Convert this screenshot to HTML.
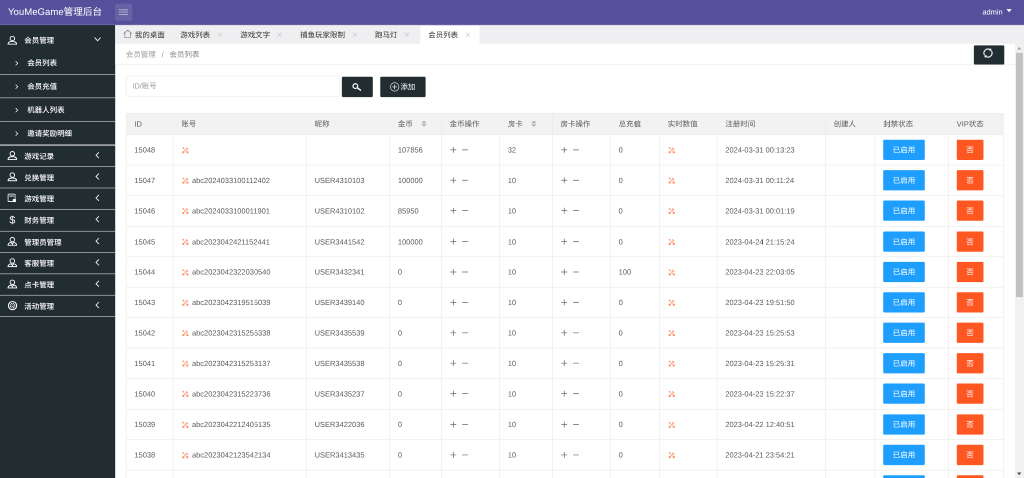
<!DOCTYPE html><html lang="zh-CN"><head><meta charset="utf-8"><title>YouMeGame管理后台</title><style>
*{box-sizing:border-box;margin:0;padding:0}
html,body{width:1024px;height:478px;overflow:hidden;background:#fff}
body{text-rendering:geometricPrecision;font-family:"Liberation Sans","Noto Sans CJK SC",sans-serif;font-size:14px;color:#333}
#half{position:absolute;left:0;top:0;width:2048px;height:956px;transform:scale(0.5);transform-origin:0 0;will-change:transform;overflow:hidden;background:#fff}
#app{position:absolute;left:0;top:0;width:1920px;height:897px;transform:scale(1.0666667);transform-origin:0 0;overflow:hidden;background:#fff}
.hd{position:absolute;left:0;top:0;width:1920px;height:46.6px;background:#55509b;border-bottom:1.6px solid #7673af;z-index:5}
.logo{position:absolute;left:15px;top:0;line-height:45px;font-size:18px;color:#fff;white-space:nowrap}
.burger{position:absolute;left:216px;top:7px;width:32px;height:32px;border-radius:3px;background:#6663a5}
.burger i{position:absolute;left:7px;width:17px;height:1.2px;background:linear-gradient(90deg,rgba(255,255,255,.9) 4.2px,rgba(255,255,255,.3) 4.2px,rgba(255,255,255,.3) 5.2px,rgba(255,255,255,.9) 5.2px)}
.adm{position:absolute;right:40px;top:0;line-height:45px;font-size:14px;color:#fff}
.caret{position:absolute;right:23px;top:17px;width:0;height:0;border:5.5px solid transparent;border-top:6px solid #fff;border-bottom:0}
.side{position:absolute;left:0;top:46px;width:216px;height:851px;background:#222d32}
.side .it{position:absolute;left:0;width:216px;color:#fff;font-size:14px;font-weight:500;white-space:nowrap}
.side .it .tx{position:absolute;left:45.5px;top:0}
.side .ic{position:absolute;left:13.9px;width:18.3px;height:16.9px}
.side .dl{font-size:20px;line-height:19px;text-align:center;color:#fff}
.side .cv{position:absolute;left:177px;width:12px;height:14px}
.side .cvd{position:absolute;left:176px;width:14px;height:12px}
.side .cvr{position:absolute;left:28px;width:7px;height:11px}
.side .sep{position:absolute;left:0;width:216px;height:1px;background:#e5e5e5}
.tabs{position:absolute;left:216px;top:46px;width:1704px;height:36.8px;background:#efeef0}
.tab{position:absolute;top:0;height:36.8px;line-height:38px;font-size:14px;color:#333;white-space:nowrap}
.tab.on{background:linear-gradient(#efeef0 3px,#fff 3px)}
.tab .x{position:absolute;top:14px;width:10px;height:10px}
.nav{position:absolute;left:216px;top:82.3px;width:1688px;height:40px;border-bottom:1px solid #e5e5e5;background:#fff}
.nav .bc{position:absolute;left:20px;top:0;line-height:41px;font-size:14px;color:#999;white-space:nowrap}
.nav .bc b{font-weight:normal;color:#808080}
.rf{position:absolute;left:1826px;top:85px;width:57px;height:36px;background:#222d32;border-radius:2px}
.inp{position:absolute;left:236px;top:142.3px;width:401px;height:38.6px;border:1px solid #e6e6e6;border-radius:2px;line-height:36px;padding-left:11px;color:#9a9a9a;font-size:14px}
.btn{position:absolute;top:143.5px;height:38px;background:#222d32;border-radius:2px;color:#fff;font-size:14px;line-height:38px;white-space:nowrap}
.sb{position:absolute;left:1903px;top:82px;width:17px;height:815px;background:#f1f1f1}
.sb .th{position:absolute;left:2px;top:17.4px;width:13px;height:457.5px;background:#c1c1c1}
.sb .up{position:absolute;left:4px;top:6px;width:0;height:0;border:4px solid transparent;border-bottom:5px solid #a3a3a3;border-top:0}
.sb .dn{position:absolute;left:4px;bottom:6px;width:0;height:0;border:4px solid transparent;border-top:5px solid #505050;border-bottom:0}
table{position:absolute;left:236px;top:212px;border-collapse:collapse;table-layout:fixed;width:1645px;color:#5a5a5a;font-size:14px}
th,td{border:1px solid #e6e6e6;padding:0 15px;text-align:left;font-weight:normal;white-space:nowrap;overflow:hidden;position:relative}
th{height:40px;background:#f2f2f2;line-height:20px;padding-bottom:2px}
td{height:57.18px;line-height:20px}
.tl{width:13px;height:13px;vertical-align:-2px;margin-left:1px;margin-right:6px;opacity:.66}
.pm{width:12px;height:12px;vertical-align:-1px;margin-right:8.5px;margin-left:1px}
.sort{display:inline-block;position:relative;width:10px;height:20px;margin-left:15px;vertical-align:top}
.sort:before{content:"";position:absolute;left:0.5px;top:-0.5px;border:5px solid transparent;border-bottom-color:#b0b0b0}
.sort:after{content:"";position:absolute;left:0.5px;top:11.5px;border:5px solid transparent;border-top-color:#b0b0b0}
.b1,.b2{display:inline-block;height:38px;line-height:38px;padding:0 18px;color:#fff;border-radius:2px;vertical-align:middle}
.b1{background:#1E9FFF;margin-left:-0.4px;padding:0 18.4px}.b2{background:#FF5722;margin-left:-0.4px}
</style></head><body><div id="half"><div id="app">
<div class="hd"><div class="logo">YouMeGame管理后台</div><div class="burger"><i style="top:10.7px"></i><i style="top:15.3px"></i><i style="top:19.9px"></i></div><div class="adm">admin</div><div class="caret"></div></div>
<div class="side">
<div class="it" style="top:10px;height:40px;line-height:40px"><svg class="ic" style="top:11px" viewBox="0 0 19 17.5"><circle cx="9.5" cy="5.5" r="4.4" fill="none" stroke="#fff" stroke-width="1.8"/><path d="M1 16.5 C1.3 12.8 4.8 11.1 9.5 11.1 C14.2 11.1 17.7 12.8 18 16.5 Z" fill="none" stroke="#fff" stroke-width="1.8" stroke-linejoin="round"/></svg><span class="tx">会员管理</span><svg class="cvd" style="top:12px" viewBox="0 0 14 12"><path d="M1.5 2.5 L7 8.5 L12.5 2.5" fill="none" stroke="#fff" stroke-width="1.6"/></svg></div>
<div class="it" style="top:50px;height:44px;line-height:44.6px"><svg class="cvr" style="top:17px" viewBox="0 0 8 12"><path d="M1.5 1.5 L6 6 L1.5 10.5" fill="none" stroke="#fff" stroke-width="1.5"/></svg><span class="tx" style="left:51px">会员列表</span></div>
<div class="sep" style="top:93px"></div>
<div class="it" style="top:94px;height:44px;line-height:44.6px"><svg class="cvr" style="top:17px" viewBox="0 0 8 12"><path d="M1.5 1.5 L6 6 L1.5 10.5" fill="none" stroke="#fff" stroke-width="1.5"/></svg><span class="tx" style="left:51px">会员充值</span></div>
<div class="sep" style="top:137px"></div>
<div class="it" style="top:138px;height:44px;line-height:44.6px"><svg class="cvr" style="top:17px" viewBox="0 0 8 12"><path d="M1.5 1.5 L6 6 L1.5 10.5" fill="none" stroke="#fff" stroke-width="1.5"/></svg><span class="tx" style="left:51px">机器人列表</span></div>
<div class="sep" style="top:181px"></div>
<div class="it" style="top:182px;height:44px;line-height:44.6px"><svg class="cvr" style="top:17px" viewBox="0 0 8 12"><path d="M1.5 1.5 L6 6 L1.5 10.5" fill="none" stroke="#fff" stroke-width="1.5"/></svg><span class="tx" style="left:51px">邀请奖励明细</span></div>
<div class="sep" style="top:225px;height:2px"></div>
<div class="it" style="top:227px;height:40px;line-height:40px"><svg class="ic" style="top:10px" viewBox="0 0 19 17.5"><circle cx="9.5" cy="5.5" r="4.4" fill="none" stroke="#fff" stroke-width="1.8"/><path d="M1 16.5 C1.3 12.8 4.8 11.1 9.5 11.1 C14.2 11.1 17.7 12.8 18 16.5 Z" fill="none" stroke="#fff" stroke-width="1.8" stroke-linejoin="round"/></svg><span class="tx">游戏记录</span><svg class="cv" style="top:11px" viewBox="0 0 12 14"><path d="M8.5 1.5 L3 7 L8.5 12.5" fill="none" stroke="#fff" stroke-width="1.6"/></svg></div>
<div class="sep" style="top:266px"></div>
<div class="it" style="top:267px;height:40px;line-height:40px"><svg class="ic" style="top:10px" viewBox="0 0 19 17.5"><circle cx="9.5" cy="5.5" r="4.4" fill="none" stroke="#fff" stroke-width="1.8"/><path d="M1 16.5 C1.3 12.8 4.8 11.1 9.5 11.1 C14.2 11.1 17.7 12.8 18 16.5 Z" fill="none" stroke="#fff" stroke-width="1.8" stroke-linejoin="round"/></svg><span class="tx">兑换管理</span><svg class="cv" style="top:11px" viewBox="0 0 12 14"><path d="M8.5 1.5 L3 7 L8.5 12.5" fill="none" stroke="#fff" stroke-width="1.6"/></svg></div>
<div class="sep" style="top:306px"></div>
<div class="it" style="top:307px;height:40px;line-height:40px"><svg class="ic" style="top:10px" viewBox="0 0 19 17.5"><rect x="1.2" y="0.9" width="13.6" height="14.6" rx="1.2" fill="none" stroke="#fff" stroke-width="1.5"/><path d="M3.6 4.8H12.4" stroke="#fff" stroke-width="1.8"/><rect x="10.4" y="10.6" width="6" height="5.8" fill="#fff"/></svg><span class="tx">游戏管理</span><svg class="cv" style="top:11px" viewBox="0 0 12 14"><path d="M8.5 1.5 L3 7 L8.5 12.5" fill="none" stroke="#fff" stroke-width="1.6"/></svg></div>
<div class="sep" style="top:346px"></div>
<div class="it" style="top:347px;height:40px;line-height:40px"><span class="ic dl" style="top:11px">$</span><span class="tx">财务管理</span><svg class="cv" style="top:11px" viewBox="0 0 12 14"><path d="M8.5 1.5 L3 7 L8.5 12.5" fill="none" stroke="#fff" stroke-width="1.6"/></svg></div>
<div class="sep" style="top:387px"></div>
<div class="it" style="top:388px;height:40px;line-height:40px"><svg class="ic" style="top:10px" viewBox="0 0 19 17.5"><circle cx="9.5" cy="5.5" r="4.4" fill="none" stroke="#fff" stroke-width="1.8"/><path d="M1 16.5 C1.3 13.2 4 11.5 7 11 L9.5 13.8 L12 11 C15 11.5 17.7 13.2 18 16.5 Z" fill="none" stroke="#fff" stroke-width="1.8" stroke-linejoin="round"/><path d="M9.5 13.8 V16.4" stroke="#fff" stroke-width="1.5"/></svg><span class="tx">管理员管理</span><svg class="cv" style="top:11px" viewBox="0 0 12 14"><path d="M8.5 1.5 L3 7 L8.5 12.5" fill="none" stroke="#fff" stroke-width="1.6"/></svg></div>
<div class="sep" style="top:427px"></div>
<div class="it" style="top:428px;height:40px;line-height:40px"><svg class="ic" style="top:10px" viewBox="0 0 19 17.5"><circle cx="9.5" cy="5.5" r="4.4" fill="none" stroke="#fff" stroke-width="1.8"/><path d="M1 16.5 C1.3 13.2 4 11.5 7 11 L9.5 13.8 L12 11 C15 11.5 17.7 13.2 18 16.5 Z" fill="none" stroke="#fff" stroke-width="1.8" stroke-linejoin="round"/><path d="M9.5 13.8 V16.4" stroke="#fff" stroke-width="1.5"/></svg><span class="tx">客服管理</span><svg class="cv" style="top:11px" viewBox="0 0 12 14"><path d="M8.5 1.5 L3 7 L8.5 12.5" fill="none" stroke="#fff" stroke-width="1.6"/></svg></div>
<div class="sep" style="top:467px"></div>
<div class="it" style="top:468px;height:40px;line-height:40px"><svg class="ic" style="top:10px" viewBox="0 0 19 17.5"><circle cx="9.5" cy="5.5" r="4.4" fill="none" stroke="#fff" stroke-width="1.8"/><path d="M1 16.5 C1.3 13.2 4 11.5 7 11 L9.5 13.8 L12 11 C15 11.5 17.7 13.2 18 16.5 Z" fill="none" stroke="#fff" stroke-width="1.8" stroke-linejoin="round"/><path d="M9.5 13.8 V16.4" stroke="#fff" stroke-width="1.5"/></svg><span class="tx">点卡管理</span><svg class="cv" style="top:11px" viewBox="0 0 12 14"><path d="M8.5 1.5 L3 7 L8.5 12.5" fill="none" stroke="#fff" stroke-width="1.6"/></svg></div>
<div class="sep" style="top:507px"></div>
<div class="it" style="top:508px;height:40px;line-height:40px"><svg class="ic" style="top:9.8px;left:13.6px;width:19px;height:18px" viewBox="0 0 19 18"><circle cx="9.5" cy="9" r="7.7" fill="none" stroke="#fff" stroke-width="2"/><circle cx="9.5" cy="9" r="4.3" fill="none" stroke="#fff" stroke-width="1.8" stroke-dasharray="2.2 1.18"/><circle cx="9.5" cy="9" r="1.6" fill="none" stroke="#fff" stroke-width="1"/></svg><span class="tx">活动管理</span><svg class="cv" style="top:11px" viewBox="0 0 12 14"><path d="M8.5 1.5 L3 7 L8.5 12.5" fill="none" stroke="#fff" stroke-width="1.6"/></svg></div>
<div class="sep" style="top:547px"></div>
</div>
<div class="tabs">
<div class="tab" style="left:0.0px;width:107.0px"><svg style="position:absolute;left:15px;top:9px;width:17px;height:17px" viewBox="0 0 16 16"><path d="M1 7.6 L8 1.2 L15 7.6 M3 6.4 V14.4 H13 V6.4" fill="none" stroke="#6a6a6a" stroke-width="1"/></svg><span style="position:absolute;left:37px">我的桌面</span></div>
<div class="tab" style="left:107.0px;width:112.4px"><span style="position:absolute;left:15px">游戏列表</span><svg class="x" style="left:84px" viewBox="0 0 10 10"><path d="M1 1L9 9M9 1L1 9" stroke="#c2c2c2" stroke-width="1" fill="none"/></svg></div>
<div class="tab" style="left:219.4px;width:112.4px"><span style="position:absolute;left:15px">游戏文字</span><svg class="x" style="left:84px" viewBox="0 0 10 10"><path d="M1 1L9 9M9 1L1 9" stroke="#c2c2c2" stroke-width="1" fill="none"/></svg></div>
<div class="tab" style="left:331.8px;width:140.4px"><span style="position:absolute;left:15px">捕鱼玩家限制</span><svg class="x" style="left:112px" viewBox="0 0 10 10"><path d="M1 1L9 9M9 1L1 9" stroke="#c2c2c2" stroke-width="1" fill="none"/></svg></div>
<div class="tab" style="left:472.2px;width:98.4px"><span style="position:absolute;left:15px">跑马灯</span><svg class="x" style="left:70px" viewBox="0 0 10 10"><path d="M1 1L9 9M9 1L1 9" stroke="#c2c2c2" stroke-width="1" fill="none"/></svg></div>
<div class="tab on" style="left:572.0px;width:111.0px"><span style="position:absolute;left:15px">会员列表</span><svg class="x" style="left:84px" viewBox="0 0 10 10"><path d="M1 1L9 9M9 1L1 9" stroke="#c2c2c2" stroke-width="1" fill="none"/></svg></div>
</div>
<div class="nav"><div class="bc">会员管理<i style="font-style:normal;margin:0 11px">/</i><b>会员列表</b></div></div>
<div class="rf"><svg style="position:absolute;left:15.7px;top:3.9px;width:21px;height:21px" viewBox="0 0 20 20"><path d="M3.76 13.6 A7.2 7.2 0 0 1 13.6 3.76 M16.24 6.4 A7.2 7.2 0 0 1 6.4 16.24" fill="none" stroke="#fff" stroke-width="1.9"/><path d="M16.6 5.6 L15.2 1.2 L11.8 6 Z M3.4 14.4 L4.8 18.8 L8.2 14 Z" fill="#fff"/></svg></div>
<div class="inp">ID/账号</div>
<div class="btn" style="left:641px;width:58px"><svg style="position:absolute;left:0;top:0;width:58px;height:38px" viewBox="0 0 58 38"><circle cx="25.3" cy="17.4" r="4.4" fill="none" stroke="#fff" stroke-width="2.2"/><path d="M29 20.6 L35 25" stroke="#fff" stroke-width="2.6" stroke-linecap="round"/></svg></div>
<div class="btn" style="left:713px;width:85px"><svg style="position:absolute;left:18px;top:10px;width:18px;height:18px" viewBox="0 0 18 18"><circle cx="9" cy="9" r="8" fill="none" stroke="#fff" stroke-width="1.2"/><path d="M9 4.4V13.6M4.4 9H13.6" stroke="#fff" stroke-width="1.3"/></svg><span style="position:absolute;left:37.6px">添加</span></div>
<table><colgroup><col style="width:88px"><col style="width:250px"><col style="width:156px"><col style="width:97px"><col style="width:109px"><col style="width:99px"><col style="width:109px"><col style="width:92px"><col style="width:108px"><col style="width:203px"><col style="width:93px"><col style="width:138px"><col style="width:103px"></colgroup><thead><tr><th>ID</th><th>账号</th><th>昵称</th><th>金币<span class="sort"></span></th><th>金币操作</th><th>房卡<span class="sort"></span></th><th>房卡操作</th><th>总充值</th><th>实时数值</th><th>注册时间</th><th>创建人</th><th>封禁状态</th><th>VIP状态</th></tr></thead><tbody>
<tr><td>15048</td><td><svg class="tl" viewBox="0 0 14 14"><path d="M2.4 2.4 L11.4 11.4 M11.2 3 L2.8 11.4" stroke="#FF5722" stroke-width="1.1" fill="none"/><circle cx="2.7" cy="2.5" r="1.6" fill="#FF5722"/><circle cx="11.2" cy="11.2" r="2.3" fill="#FF5722"/><circle cx="2.9" cy="11.2" r="2.3" fill="#FF5722"/><path d="M8.6 1 L13 5.4 L11.2 6.4 L7.8 3 Z" fill="#FF5722"/></svg></td><td></td><td>107856</td><td><svg class="pm" viewBox="0 0 12 12"><path d="M6 0.5V11.5M0.5 6H11.5" stroke="#666" stroke-width="1.35" fill="none"/></svg><svg class="pm" viewBox="0 0 12 12"><path d="M0.5 6H11.5" stroke="#666" stroke-width="1.35" fill="none"/></svg></td><td>32</td><td><svg class="pm" viewBox="0 0 12 12"><path d="M6 0.5V11.5M0.5 6H11.5" stroke="#666" stroke-width="1.35" fill="none"/></svg><svg class="pm" viewBox="0 0 12 12"><path d="M0.5 6H11.5" stroke="#666" stroke-width="1.35" fill="none"/></svg></td><td>0</td><td><svg class="tl" viewBox="0 0 14 14"><path d="M2.4 2.4 L11.4 11.4 M11.2 3 L2.8 11.4" stroke="#FF5722" stroke-width="1.1" fill="none"/><circle cx="2.7" cy="2.5" r="1.6" fill="#FF5722"/><circle cx="11.2" cy="11.2" r="2.3" fill="#FF5722"/><circle cx="2.9" cy="11.2" r="2.3" fill="#FF5722"/><path d="M8.6 1 L13 5.4 L11.2 6.4 L7.8 3 Z" fill="#FF5722"/></svg></td><td>2024-03-31 00:13:23</td><td></td><td><span class="b1">已启用</span></td><td><span class="b2">否</span></td></tr>
<tr><td>15047</td><td><svg class="tl" viewBox="0 0 14 14"><path d="M2.4 2.4 L11.4 11.4 M11.2 3 L2.8 11.4" stroke="#FF5722" stroke-width="1.1" fill="none"/><circle cx="2.7" cy="2.5" r="1.6" fill="#FF5722"/><circle cx="11.2" cy="11.2" r="2.3" fill="#FF5722"/><circle cx="2.9" cy="11.2" r="2.3" fill="#FF5722"/><path d="M8.6 1 L13 5.4 L11.2 6.4 L7.8 3 Z" fill="#FF5722"/></svg>abc2024033100112402</td><td>USER4310103</td><td>100000</td><td><svg class="pm" viewBox="0 0 12 12"><path d="M6 0.5V11.5M0.5 6H11.5" stroke="#666" stroke-width="1.35" fill="none"/></svg><svg class="pm" viewBox="0 0 12 12"><path d="M0.5 6H11.5" stroke="#666" stroke-width="1.35" fill="none"/></svg></td><td>10</td><td><svg class="pm" viewBox="0 0 12 12"><path d="M6 0.5V11.5M0.5 6H11.5" stroke="#666" stroke-width="1.35" fill="none"/></svg><svg class="pm" viewBox="0 0 12 12"><path d="M0.5 6H11.5" stroke="#666" stroke-width="1.35" fill="none"/></svg></td><td>0</td><td><svg class="tl" viewBox="0 0 14 14"><path d="M2.4 2.4 L11.4 11.4 M11.2 3 L2.8 11.4" stroke="#FF5722" stroke-width="1.1" fill="none"/><circle cx="2.7" cy="2.5" r="1.6" fill="#FF5722"/><circle cx="11.2" cy="11.2" r="2.3" fill="#FF5722"/><circle cx="2.9" cy="11.2" r="2.3" fill="#FF5722"/><path d="M8.6 1 L13 5.4 L11.2 6.4 L7.8 3 Z" fill="#FF5722"/></svg></td><td>2024-03-31 00:11:24</td><td></td><td><span class="b1">已启用</span></td><td><span class="b2">否</span></td></tr>
<tr><td>15046</td><td><svg class="tl" viewBox="0 0 14 14"><path d="M2.4 2.4 L11.4 11.4 M11.2 3 L2.8 11.4" stroke="#FF5722" stroke-width="1.1" fill="none"/><circle cx="2.7" cy="2.5" r="1.6" fill="#FF5722"/><circle cx="11.2" cy="11.2" r="2.3" fill="#FF5722"/><circle cx="2.9" cy="11.2" r="2.3" fill="#FF5722"/><path d="M8.6 1 L13 5.4 L11.2 6.4 L7.8 3 Z" fill="#FF5722"/></svg>abc2024033100011901</td><td>USER4310102</td><td>85950</td><td><svg class="pm" viewBox="0 0 12 12"><path d="M6 0.5V11.5M0.5 6H11.5" stroke="#666" stroke-width="1.35" fill="none"/></svg><svg class="pm" viewBox="0 0 12 12"><path d="M0.5 6H11.5" stroke="#666" stroke-width="1.35" fill="none"/></svg></td><td>10</td><td><svg class="pm" viewBox="0 0 12 12"><path d="M6 0.5V11.5M0.5 6H11.5" stroke="#666" stroke-width="1.35" fill="none"/></svg><svg class="pm" viewBox="0 0 12 12"><path d="M0.5 6H11.5" stroke="#666" stroke-width="1.35" fill="none"/></svg></td><td>0</td><td><svg class="tl" viewBox="0 0 14 14"><path d="M2.4 2.4 L11.4 11.4 M11.2 3 L2.8 11.4" stroke="#FF5722" stroke-width="1.1" fill="none"/><circle cx="2.7" cy="2.5" r="1.6" fill="#FF5722"/><circle cx="11.2" cy="11.2" r="2.3" fill="#FF5722"/><circle cx="2.9" cy="11.2" r="2.3" fill="#FF5722"/><path d="M8.6 1 L13 5.4 L11.2 6.4 L7.8 3 Z" fill="#FF5722"/></svg></td><td>2024-03-31 00:01:19</td><td></td><td><span class="b1">已启用</span></td><td><span class="b2">否</span></td></tr>
<tr><td>15045</td><td><svg class="tl" viewBox="0 0 14 14"><path d="M2.4 2.4 L11.4 11.4 M11.2 3 L2.8 11.4" stroke="#FF5722" stroke-width="1.1" fill="none"/><circle cx="2.7" cy="2.5" r="1.6" fill="#FF5722"/><circle cx="11.2" cy="11.2" r="2.3" fill="#FF5722"/><circle cx="2.9" cy="11.2" r="2.3" fill="#FF5722"/><path d="M8.6 1 L13 5.4 L11.2 6.4 L7.8 3 Z" fill="#FF5722"/></svg>abc2023042421152441</td><td>USER3441542</td><td>100000</td><td><svg class="pm" viewBox="0 0 12 12"><path d="M6 0.5V11.5M0.5 6H11.5" stroke="#666" stroke-width="1.35" fill="none"/></svg><svg class="pm" viewBox="0 0 12 12"><path d="M0.5 6H11.5" stroke="#666" stroke-width="1.35" fill="none"/></svg></td><td>10</td><td><svg class="pm" viewBox="0 0 12 12"><path d="M6 0.5V11.5M0.5 6H11.5" stroke="#666" stroke-width="1.35" fill="none"/></svg><svg class="pm" viewBox="0 0 12 12"><path d="M0.5 6H11.5" stroke="#666" stroke-width="1.35" fill="none"/></svg></td><td>0</td><td><svg class="tl" viewBox="0 0 14 14"><path d="M2.4 2.4 L11.4 11.4 M11.2 3 L2.8 11.4" stroke="#FF5722" stroke-width="1.1" fill="none"/><circle cx="2.7" cy="2.5" r="1.6" fill="#FF5722"/><circle cx="11.2" cy="11.2" r="2.3" fill="#FF5722"/><circle cx="2.9" cy="11.2" r="2.3" fill="#FF5722"/><path d="M8.6 1 L13 5.4 L11.2 6.4 L7.8 3 Z" fill="#FF5722"/></svg></td><td>2023-04-24 21:15:24</td><td></td><td><span class="b1">已启用</span></td><td><span class="b2">否</span></td></tr>
<tr><td>15044</td><td><svg class="tl" viewBox="0 0 14 14"><path d="M2.4 2.4 L11.4 11.4 M11.2 3 L2.8 11.4" stroke="#FF5722" stroke-width="1.1" fill="none"/><circle cx="2.7" cy="2.5" r="1.6" fill="#FF5722"/><circle cx="11.2" cy="11.2" r="2.3" fill="#FF5722"/><circle cx="2.9" cy="11.2" r="2.3" fill="#FF5722"/><path d="M8.6 1 L13 5.4 L11.2 6.4 L7.8 3 Z" fill="#FF5722"/></svg>abc2023042322030540</td><td>USER3432341</td><td>0</td><td><svg class="pm" viewBox="0 0 12 12"><path d="M6 0.5V11.5M0.5 6H11.5" stroke="#666" stroke-width="1.35" fill="none"/></svg><svg class="pm" viewBox="0 0 12 12"><path d="M0.5 6H11.5" stroke="#666" stroke-width="1.35" fill="none"/></svg></td><td>10</td><td><svg class="pm" viewBox="0 0 12 12"><path d="M6 0.5V11.5M0.5 6H11.5" stroke="#666" stroke-width="1.35" fill="none"/></svg><svg class="pm" viewBox="0 0 12 12"><path d="M0.5 6H11.5" stroke="#666" stroke-width="1.35" fill="none"/></svg></td><td>100</td><td><svg class="tl" viewBox="0 0 14 14"><path d="M2.4 2.4 L11.4 11.4 M11.2 3 L2.8 11.4" stroke="#FF5722" stroke-width="1.1" fill="none"/><circle cx="2.7" cy="2.5" r="1.6" fill="#FF5722"/><circle cx="11.2" cy="11.2" r="2.3" fill="#FF5722"/><circle cx="2.9" cy="11.2" r="2.3" fill="#FF5722"/><path d="M8.6 1 L13 5.4 L11.2 6.4 L7.8 3 Z" fill="#FF5722"/></svg></td><td>2023-04-23 22:03:05</td><td></td><td><span class="b1">已启用</span></td><td><span class="b2">否</span></td></tr>
<tr><td>15043</td><td><svg class="tl" viewBox="0 0 14 14"><path d="M2.4 2.4 L11.4 11.4 M11.2 3 L2.8 11.4" stroke="#FF5722" stroke-width="1.1" fill="none"/><circle cx="2.7" cy="2.5" r="1.6" fill="#FF5722"/><circle cx="11.2" cy="11.2" r="2.3" fill="#FF5722"/><circle cx="2.9" cy="11.2" r="2.3" fill="#FF5722"/><path d="M8.6 1 L13 5.4 L11.2 6.4 L7.8 3 Z" fill="#FF5722"/></svg>abc2023042319515039</td><td>USER3439140</td><td>0</td><td><svg class="pm" viewBox="0 0 12 12"><path d="M6 0.5V11.5M0.5 6H11.5" stroke="#666" stroke-width="1.35" fill="none"/></svg><svg class="pm" viewBox="0 0 12 12"><path d="M0.5 6H11.5" stroke="#666" stroke-width="1.35" fill="none"/></svg></td><td>10</td><td><svg class="pm" viewBox="0 0 12 12"><path d="M6 0.5V11.5M0.5 6H11.5" stroke="#666" stroke-width="1.35" fill="none"/></svg><svg class="pm" viewBox="0 0 12 12"><path d="M0.5 6H11.5" stroke="#666" stroke-width="1.35" fill="none"/></svg></td><td>0</td><td><svg class="tl" viewBox="0 0 14 14"><path d="M2.4 2.4 L11.4 11.4 M11.2 3 L2.8 11.4" stroke="#FF5722" stroke-width="1.1" fill="none"/><circle cx="2.7" cy="2.5" r="1.6" fill="#FF5722"/><circle cx="11.2" cy="11.2" r="2.3" fill="#FF5722"/><circle cx="2.9" cy="11.2" r="2.3" fill="#FF5722"/><path d="M8.6 1 L13 5.4 L11.2 6.4 L7.8 3 Z" fill="#FF5722"/></svg></td><td>2023-04-23 19:51:50</td><td></td><td><span class="b1">已启用</span></td><td><span class="b2">否</span></td></tr>
<tr><td>15042</td><td><svg class="tl" viewBox="0 0 14 14"><path d="M2.4 2.4 L11.4 11.4 M11.2 3 L2.8 11.4" stroke="#FF5722" stroke-width="1.1" fill="none"/><circle cx="2.7" cy="2.5" r="1.6" fill="#FF5722"/><circle cx="11.2" cy="11.2" r="2.3" fill="#FF5722"/><circle cx="2.9" cy="11.2" r="2.3" fill="#FF5722"/><path d="M8.6 1 L13 5.4 L11.2 6.4 L7.8 3 Z" fill="#FF5722"/></svg>abc2023042315255338</td><td>USER3435539</td><td>0</td><td><svg class="pm" viewBox="0 0 12 12"><path d="M6 0.5V11.5M0.5 6H11.5" stroke="#666" stroke-width="1.35" fill="none"/></svg><svg class="pm" viewBox="0 0 12 12"><path d="M0.5 6H11.5" stroke="#666" stroke-width="1.35" fill="none"/></svg></td><td>10</td><td><svg class="pm" viewBox="0 0 12 12"><path d="M6 0.5V11.5M0.5 6H11.5" stroke="#666" stroke-width="1.35" fill="none"/></svg><svg class="pm" viewBox="0 0 12 12"><path d="M0.5 6H11.5" stroke="#666" stroke-width="1.35" fill="none"/></svg></td><td>0</td><td><svg class="tl" viewBox="0 0 14 14"><path d="M2.4 2.4 L11.4 11.4 M11.2 3 L2.8 11.4" stroke="#FF5722" stroke-width="1.1" fill="none"/><circle cx="2.7" cy="2.5" r="1.6" fill="#FF5722"/><circle cx="11.2" cy="11.2" r="2.3" fill="#FF5722"/><circle cx="2.9" cy="11.2" r="2.3" fill="#FF5722"/><path d="M8.6 1 L13 5.4 L11.2 6.4 L7.8 3 Z" fill="#FF5722"/></svg></td><td>2023-04-23 15:25:53</td><td></td><td><span class="b1">已启用</span></td><td><span class="b2">否</span></td></tr>
<tr><td>15041</td><td><svg class="tl" viewBox="0 0 14 14"><path d="M2.4 2.4 L11.4 11.4 M11.2 3 L2.8 11.4" stroke="#FF5722" stroke-width="1.1" fill="none"/><circle cx="2.7" cy="2.5" r="1.6" fill="#FF5722"/><circle cx="11.2" cy="11.2" r="2.3" fill="#FF5722"/><circle cx="2.9" cy="11.2" r="2.3" fill="#FF5722"/><path d="M8.6 1 L13 5.4 L11.2 6.4 L7.8 3 Z" fill="#FF5722"/></svg>abc2023042315253137</td><td>USER3435538</td><td>0</td><td><svg class="pm" viewBox="0 0 12 12"><path d="M6 0.5V11.5M0.5 6H11.5" stroke="#666" stroke-width="1.35" fill="none"/></svg><svg class="pm" viewBox="0 0 12 12"><path d="M0.5 6H11.5" stroke="#666" stroke-width="1.35" fill="none"/></svg></td><td>10</td><td><svg class="pm" viewBox="0 0 12 12"><path d="M6 0.5V11.5M0.5 6H11.5" stroke="#666" stroke-width="1.35" fill="none"/></svg><svg class="pm" viewBox="0 0 12 12"><path d="M0.5 6H11.5" stroke="#666" stroke-width="1.35" fill="none"/></svg></td><td>0</td><td><svg class="tl" viewBox="0 0 14 14"><path d="M2.4 2.4 L11.4 11.4 M11.2 3 L2.8 11.4" stroke="#FF5722" stroke-width="1.1" fill="none"/><circle cx="2.7" cy="2.5" r="1.6" fill="#FF5722"/><circle cx="11.2" cy="11.2" r="2.3" fill="#FF5722"/><circle cx="2.9" cy="11.2" r="2.3" fill="#FF5722"/><path d="M8.6 1 L13 5.4 L11.2 6.4 L7.8 3 Z" fill="#FF5722"/></svg></td><td>2023-04-23 15:25:31</td><td></td><td><span class="b1">已启用</span></td><td><span class="b2">否</span></td></tr>
<tr><td>15040</td><td><svg class="tl" viewBox="0 0 14 14"><path d="M2.4 2.4 L11.4 11.4 M11.2 3 L2.8 11.4" stroke="#FF5722" stroke-width="1.1" fill="none"/><circle cx="2.7" cy="2.5" r="1.6" fill="#FF5722"/><circle cx="11.2" cy="11.2" r="2.3" fill="#FF5722"/><circle cx="2.9" cy="11.2" r="2.3" fill="#FF5722"/><path d="M8.6 1 L13 5.4 L11.2 6.4 L7.8 3 Z" fill="#FF5722"/></svg>abc2023042315223736</td><td>USER3435237</td><td>0</td><td><svg class="pm" viewBox="0 0 12 12"><path d="M6 0.5V11.5M0.5 6H11.5" stroke="#666" stroke-width="1.35" fill="none"/></svg><svg class="pm" viewBox="0 0 12 12"><path d="M0.5 6H11.5" stroke="#666" stroke-width="1.35" fill="none"/></svg></td><td>10</td><td><svg class="pm" viewBox="0 0 12 12"><path d="M6 0.5V11.5M0.5 6H11.5" stroke="#666" stroke-width="1.35" fill="none"/></svg><svg class="pm" viewBox="0 0 12 12"><path d="M0.5 6H11.5" stroke="#666" stroke-width="1.35" fill="none"/></svg></td><td>0</td><td><svg class="tl" viewBox="0 0 14 14"><path d="M2.4 2.4 L11.4 11.4 M11.2 3 L2.8 11.4" stroke="#FF5722" stroke-width="1.1" fill="none"/><circle cx="2.7" cy="2.5" r="1.6" fill="#FF5722"/><circle cx="11.2" cy="11.2" r="2.3" fill="#FF5722"/><circle cx="2.9" cy="11.2" r="2.3" fill="#FF5722"/><path d="M8.6 1 L13 5.4 L11.2 6.4 L7.8 3 Z" fill="#FF5722"/></svg></td><td>2023-04-23 15:22:37</td><td></td><td><span class="b1">已启用</span></td><td><span class="b2">否</span></td></tr>
<tr><td>15039</td><td><svg class="tl" viewBox="0 0 14 14"><path d="M2.4 2.4 L11.4 11.4 M11.2 3 L2.8 11.4" stroke="#FF5722" stroke-width="1.1" fill="none"/><circle cx="2.7" cy="2.5" r="1.6" fill="#FF5722"/><circle cx="11.2" cy="11.2" r="2.3" fill="#FF5722"/><circle cx="2.9" cy="11.2" r="2.3" fill="#FF5722"/><path d="M8.6 1 L13 5.4 L11.2 6.4 L7.8 3 Z" fill="#FF5722"/></svg>abc2023042212405135</td><td>USER3422036</td><td>0</td><td><svg class="pm" viewBox="0 0 12 12"><path d="M6 0.5V11.5M0.5 6H11.5" stroke="#666" stroke-width="1.35" fill="none"/></svg><svg class="pm" viewBox="0 0 12 12"><path d="M0.5 6H11.5" stroke="#666" stroke-width="1.35" fill="none"/></svg></td><td>10</td><td><svg class="pm" viewBox="0 0 12 12"><path d="M6 0.5V11.5M0.5 6H11.5" stroke="#666" stroke-width="1.35" fill="none"/></svg><svg class="pm" viewBox="0 0 12 12"><path d="M0.5 6H11.5" stroke="#666" stroke-width="1.35" fill="none"/></svg></td><td>0</td><td><svg class="tl" viewBox="0 0 14 14"><path d="M2.4 2.4 L11.4 11.4 M11.2 3 L2.8 11.4" stroke="#FF5722" stroke-width="1.1" fill="none"/><circle cx="2.7" cy="2.5" r="1.6" fill="#FF5722"/><circle cx="11.2" cy="11.2" r="2.3" fill="#FF5722"/><circle cx="2.9" cy="11.2" r="2.3" fill="#FF5722"/><path d="M8.6 1 L13 5.4 L11.2 6.4 L7.8 3 Z" fill="#FF5722"/></svg></td><td>2023-04-22 12:40:51</td><td></td><td><span class="b1">已启用</span></td><td><span class="b2">否</span></td></tr>
<tr><td>15038</td><td><svg class="tl" viewBox="0 0 14 14"><path d="M2.4 2.4 L11.4 11.4 M11.2 3 L2.8 11.4" stroke="#FF5722" stroke-width="1.1" fill="none"/><circle cx="2.7" cy="2.5" r="1.6" fill="#FF5722"/><circle cx="11.2" cy="11.2" r="2.3" fill="#FF5722"/><circle cx="2.9" cy="11.2" r="2.3" fill="#FF5722"/><path d="M8.6 1 L13 5.4 L11.2 6.4 L7.8 3 Z" fill="#FF5722"/></svg>abc2023042123542134</td><td>USER3413435</td><td>0</td><td><svg class="pm" viewBox="0 0 12 12"><path d="M6 0.5V11.5M0.5 6H11.5" stroke="#666" stroke-width="1.35" fill="none"/></svg><svg class="pm" viewBox="0 0 12 12"><path d="M0.5 6H11.5" stroke="#666" stroke-width="1.35" fill="none"/></svg></td><td>10</td><td><svg class="pm" viewBox="0 0 12 12"><path d="M6 0.5V11.5M0.5 6H11.5" stroke="#666" stroke-width="1.35" fill="none"/></svg><svg class="pm" viewBox="0 0 12 12"><path d="M0.5 6H11.5" stroke="#666" stroke-width="1.35" fill="none"/></svg></td><td>0</td><td><svg class="tl" viewBox="0 0 14 14"><path d="M2.4 2.4 L11.4 11.4 M11.2 3 L2.8 11.4" stroke="#FF5722" stroke-width="1.1" fill="none"/><circle cx="2.7" cy="2.5" r="1.6" fill="#FF5722"/><circle cx="11.2" cy="11.2" r="2.3" fill="#FF5722"/><circle cx="2.9" cy="11.2" r="2.3" fill="#FF5722"/><path d="M8.6 1 L13 5.4 L11.2 6.4 L7.8 3 Z" fill="#FF5722"/></svg></td><td>2023-04-21 23:54:21</td><td></td><td><span class="b1">已启用</span></td><td><span class="b2">否</span></td></tr>
<tr><td>15037</td><td><svg class="tl" viewBox="0 0 14 14"><path d="M2.4 2.4 L11.4 11.4 M11.2 3 L2.8 11.4" stroke="#FF5722" stroke-width="1.1" fill="none"/><circle cx="2.7" cy="2.5" r="1.6" fill="#FF5722"/><circle cx="11.2" cy="11.2" r="2.3" fill="#FF5722"/><circle cx="2.9" cy="11.2" r="2.3" fill="#FF5722"/><path d="M8.6 1 L13 5.4 L11.2 6.4 L7.8 3 Z" fill="#FF5722"/></svg>abc2023042123110233</td><td>USER3410833</td><td>0</td><td><svg class="pm" viewBox="0 0 12 12"><path d="M6 0.5V11.5M0.5 6H11.5" stroke="#666" stroke-width="1.35" fill="none"/></svg><svg class="pm" viewBox="0 0 12 12"><path d="M0.5 6H11.5" stroke="#666" stroke-width="1.35" fill="none"/></svg></td><td>10</td><td><svg class="pm" viewBox="0 0 12 12"><path d="M6 0.5V11.5M0.5 6H11.5" stroke="#666" stroke-width="1.35" fill="none"/></svg><svg class="pm" viewBox="0 0 12 12"><path d="M0.5 6H11.5" stroke="#666" stroke-width="1.35" fill="none"/></svg></td><td>0</td><td><svg class="tl" viewBox="0 0 14 14"><path d="M2.4 2.4 L11.4 11.4 M11.2 3 L2.8 11.4" stroke="#FF5722" stroke-width="1.1" fill="none"/><circle cx="2.7" cy="2.5" r="1.6" fill="#FF5722"/><circle cx="11.2" cy="11.2" r="2.3" fill="#FF5722"/><circle cx="2.9" cy="11.2" r="2.3" fill="#FF5722"/><path d="M8.6 1 L13 5.4 L11.2 6.4 L7.8 3 Z" fill="#FF5722"/></svg></td><td>2023-04-21 23:11:02</td><td></td><td><span class="b1">已启用</span></td><td><span class="b2">否</span></td></tr>
</tbody></table>
<div class="sb"><div class="up"></div><div class="th"></div><div class="dn"></div></div>
</div></div></body></html>
